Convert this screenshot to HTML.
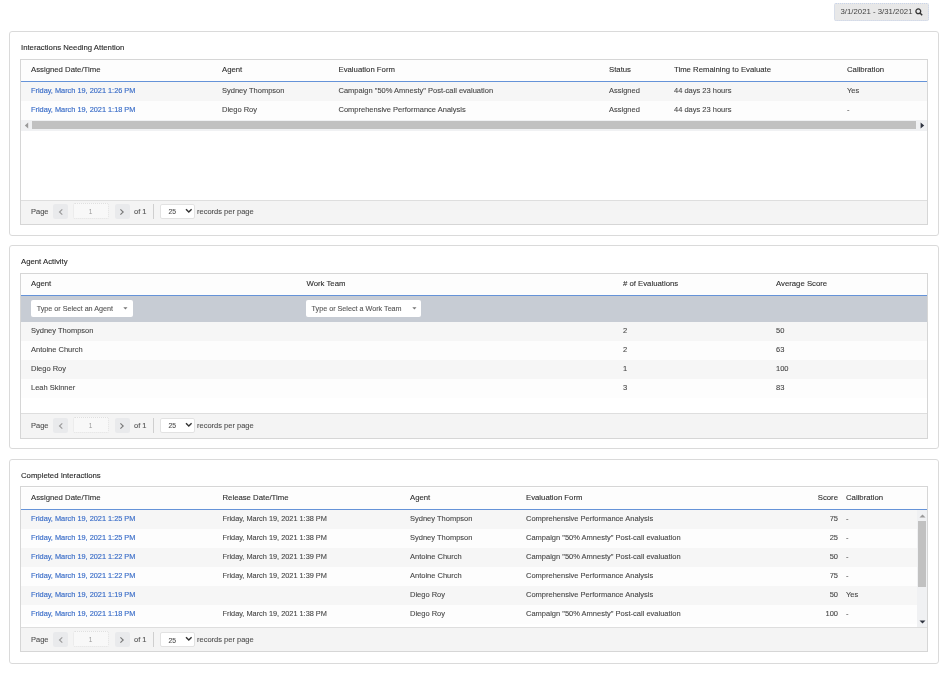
<!DOCTYPE html>
<html><head><meta charset="utf-8"><style>
html,body{margin:0;padding:0;background:#fff;width:950px;height:682px;overflow:hidden;position:relative}
#root{position:absolute;left:0;top:0;width:950px;height:682px;will-change:transform}
.t{position:absolute;white-space:nowrap;line-height:1;font-family:"Liberation Sans",sans-serif}
.b{color:#474747;-webkit-text-stroke:0.1px #474747}
.h{color:#2e2e2e;-webkit-text-stroke:0.1px #2e2e2e}
.ttl{color:#2a2a2a;-webkit-text-stroke:0.12px #2a2a2a}
.lk{color:#3a6dc8;-webkit-text-stroke:0.15px #3a6dc8}
.p{color:#505050;-webkit-text-stroke:0.1px #505050}
.btn{color:#444}
.f{color:#555;-webkit-text-stroke:0.1px #555}
</style></head><body><div id="root">
<div style="position:absolute;left:834px;top:3px;width:95px;height:18px;background:#e8e8e8;border:1px dotted #c8d4ea;box-sizing:border-box;border-radius:2px"></div>
<div class="t btn" style="left:840.5px;top:8.20px;font-size:7.8px;">3/1/2021 - 3/31/2021</div>
<svg style="position:absolute;left:915px;top:8px" width="8" height="8" viewBox="0 0 8 8"><circle cx="3.3" cy="3.3" r="2.4" fill="none" stroke="#333" stroke-width="1.3"/><path d="M5 5 L7.2 7.2" stroke="#333" stroke-width="1.5"/></svg>
<div style="position:absolute;left:9px;top:31px;width:930px;height:204.5px;border:1px solid #dadada;border-radius:3px;box-sizing:border-box"></div>
<div class="t ttl" style="left:21px;top:43.64px;font-size:7.75px;">Interactions Needing Attention</div>
<div style="position:absolute;left:20px;top:59px;width:908px;height:166px;border:1px solid #d6d6d6;box-sizing:border-box;background:#fff"></div>
<div style="position:absolute;left:21px;top:60px;width:906px;height:21px;background:#fdfdfd"></div>
<div style="position:absolute;left:21px;top:81px;width:906px;height:1px;background:#6593d8"></div>
<div class="t h" style="left:31px;top:65.54px;font-size:7.75px;">Assigned Date/Time</div>
<div class="t h" style="left:222px;top:65.54px;font-size:7.75px;">Agent</div>
<div class="t h" style="left:338.5px;top:65.54px;font-size:7.75px;">Evaluation Form</div>
<div class="t h" style="left:609px;top:65.54px;font-size:7.75px;">Status</div>
<div class="t h" style="left:674px;top:65.54px;font-size:7.75px;">Time Remaining to Evaluate</div>
<div class="t h" style="left:847px;top:65.54px;font-size:7.75px;">Calibration</div>
<div style="position:absolute;left:21px;top:82px;width:906px;height:19px;background:#f6f6f6"></div>
<div style="position:absolute;left:21px;top:101px;width:906px;height:19px;background:#fdfdfd"></div>
<div class="t lk" style="left:31px;top:87.38px;font-size:7.35px;">Friday, March 19, 2021 1:26 PM</div>
<div class="t b" style="left:222px;top:87.25px;font-size:7.5px;">Sydney Thompson</div>
<div class="t b" style="left:338.5px;top:87.25px;font-size:7.5px;">Campaign "50% Amnesty" Post-call evaluation</div>
<div class="t b" style="left:609px;top:87.25px;font-size:7.5px;">Assigned</div>
<div class="t b" style="left:674px;top:87.25px;font-size:7.5px;">44 days 23 hours</div>
<div class="t b" style="left:847px;top:87.25px;font-size:7.5px;">Yes</div>
<div class="t lk" style="left:31px;top:106.38px;font-size:7.35px;">Friday, March 19, 2021 1:18 PM</div>
<div class="t b" style="left:222px;top:106.25px;font-size:7.5px;">Diego Roy</div>
<div class="t b" style="left:338.5px;top:106.25px;font-size:7.5px;">Comprehensive Performance Analysis</div>
<div class="t b" style="left:609px;top:106.25px;font-size:7.5px;">Assigned</div>
<div class="t b" style="left:674px;top:106.25px;font-size:7.5px;">44 days 23 hours</div>
<div class="t b" style="left:847px;top:106.25px;font-size:7.5px;">-</div>
<div style="position:absolute;left:21px;top:120px;width:906px;height:10.5px;background:#f0f1f3"></div>
<div style="position:absolute;left:32px;top:121px;width:884px;height:8.3px;background:#c1c1c1"></div>
<svg style="position:absolute;left:24px;top:122px" width="5" height="7" viewBox="0 0 5 7"><path d="M4.2 0.5 L0.8 3.5 L4.2 6.5Z" fill="#9a9a9a"/></svg>
<svg style="position:absolute;left:920px;top:122px" width="5" height="7" viewBox="0 0 5 7"><path d="M0.6 0.5 L4.2 3.5 L0.6 6.5Z" fill="#2f3440"/></svg>
<div style="position:absolute;left:21px;top:200px;width:906px;height:24px;background:#f4f4f4;border-top:1px solid #dedede;box-sizing:border-box"></div>
<div class="t p" style="left:31px;top:207.55px;font-size:7.5px;">Page</div>
<div style="position:absolute;left:52.5px;top:203.5px;width:15px;height:15.5px;background:#e9eaec;border-radius:2px"></div>
<svg style="position:absolute;left:58px;top:208.5px" width="6" height="6" viewBox="0 0 6 6"><path d="M4.3 0.4 L1.5 3 L4.3 5.6" fill="none" stroke="#999" stroke-width="1.1"/></svg>
<div style="position:absolute;left:73px;top:203.2px;width:36px;height:16px;background:#f8f8f8;border:1px dotted #e0e0e0;box-sizing:border-box;border-radius:2px"></div>
<div class="t p" style="left:90.5px;top:209.05px;font-size:7.5px;color:#999;-webkit-text-stroke:0;transform:translateX(-50%);font-size:6.5px">1</div>
<div style="position:absolute;left:114.5px;top:203.5px;width:15px;height:15.5px;background:#e9eaec;border-radius:2px"></div>
<svg style="position:absolute;left:118.5px;top:208.5px" width="6" height="6" viewBox="0 0 6 6"><path d="M1.4 0.4 L4.2 3 L1.4 5.6" fill="none" stroke="#777" stroke-width="1.1"/></svg>
<div class="t p" style="left:134px;top:207.75px;font-size:7.5px;">of 1</div>
<div style="position:absolute;left:153px;top:203.5px;width:1px;height:15px;background:#cfcfcf"></div>
<div style="position:absolute;left:159.5px;top:203.5px;width:35px;height:15.5px;background:#fff;border:1px solid #e2e2e2;box-sizing:border-box;border-radius:2px"></div>
<div class="t p" style="left:168.5px;top:209.35px;font-size:7.5px;font-size:6.8px">25</div>
<svg style="position:absolute;left:185px;top:208.0px" width="8" height="6" viewBox="0 0 8 6"><path d="M1 1.2 L3.8 4 L6.6 1.2" fill="none" stroke="#333" stroke-width="1.4"/></svg>
<div class="t p" style="left:197px;top:207.65px;font-size:7.5px;">records per page</div>
<div style="position:absolute;left:9px;top:245px;width:930px;height:203.5px;border:1px solid #dadada;border-radius:3px;box-sizing:border-box"></div>
<div class="t ttl" style="left:21px;top:257.64px;font-size:7.75px;">Agent Activity</div>
<div style="position:absolute;left:20px;top:272.5px;width:908px;height:166.0px;border:1px solid #d6d6d6;box-sizing:border-box;background:#fff"></div>
<div style="position:absolute;left:21px;top:274px;width:906px;height:21px;background:#fdfdfd"></div>
<div style="position:absolute;left:21px;top:295px;width:906px;height:1px;background:#6593d8"></div>
<div class="t h" style="left:31px;top:279.54px;font-size:7.75px;">Agent</div>
<div class="t h" style="left:306.5px;top:279.54px;font-size:7.75px;">Work Team</div>
<div class="t h" style="left:623px;top:279.54px;font-size:7.75px;"># of Evaluations</div>
<div class="t h" style="left:776px;top:279.54px;font-size:7.75px;">Average Score</div>
<div style="position:absolute;left:21px;top:296px;width:906px;height:25.5px;background:#c7ccd4"></div>
<div style="position:absolute;left:31px;top:300px;width:101.5px;height:17.2px;background:#fff;border-radius:2px"></div>
<div class="t f" style="left:36.7px;top:304.91px;font-size:7.2px;">Type or Select an Agent</div>
<svg style="position:absolute;left:123px;top:307px" width="5" height="3" viewBox="0 0 5 3"><path d="M0.3 0.3 L4.5 0.3 L2.4 2.6Z" fill="#777"/></svg>
<div style="position:absolute;left:306px;top:300px;width:114.7px;height:17.2px;background:#fff;border-radius:2px"></div>
<div class="t f" style="left:311.6px;top:304.91px;font-size:7.2px;">Type or Select a Work Team</div>
<svg style="position:absolute;left:411.5px;top:307px" width="5" height="3" viewBox="0 0 5 3"><path d="M0.3 0.3 L4.5 0.3 L2.4 2.6Z" fill="#777"/></svg>
<div style="position:absolute;left:21px;top:321.5px;width:906px;height:19px;background:#f6f6f6"></div>
<div style="position:absolute;left:21px;top:340.5px;width:906px;height:19px;background:#fdfdfd"></div>
<div style="position:absolute;left:21px;top:359.5px;width:906px;height:19px;background:#f6f6f6"></div>
<div style="position:absolute;left:21px;top:378.5px;width:906px;height:19px;background:#fdfdfd"></div>
<div class="t b" style="left:31px;top:326.85px;font-size:7.5px;">Sydney Thompson</div>
<div class="t b" style="left:623px;top:326.85px;font-size:7.5px;">2</div>
<div class="t b" style="left:776px;top:326.85px;font-size:7.5px;">50</div>
<div class="t b" style="left:31px;top:345.85px;font-size:7.5px;">Antoine Church</div>
<div class="t b" style="left:623px;top:345.85px;font-size:7.5px;">2</div>
<div class="t b" style="left:776px;top:345.85px;font-size:7.5px;">63</div>
<div class="t b" style="left:31px;top:364.85px;font-size:7.5px;">Diego Roy</div>
<div class="t b" style="left:623px;top:364.85px;font-size:7.5px;">1</div>
<div class="t b" style="left:776px;top:364.85px;font-size:7.5px;">100</div>
<div class="t b" style="left:31px;top:383.85px;font-size:7.5px;">Leah Skinner</div>
<div class="t b" style="left:623px;top:383.85px;font-size:7.5px;">3</div>
<div class="t b" style="left:776px;top:383.85px;font-size:7.5px;">83</div>
<div style="position:absolute;left:21px;top:413px;width:906px;height:24.5px;background:#f4f4f4;border-top:1px solid #dedede;box-sizing:border-box"></div>
<div class="t p" style="left:31px;top:421.55px;font-size:7.5px;">Page</div>
<div style="position:absolute;left:52.5px;top:417.5px;width:15px;height:15.5px;background:#e9eaec;border-radius:2px"></div>
<svg style="position:absolute;left:58px;top:422.5px" width="6" height="6" viewBox="0 0 6 6"><path d="M4.3 0.4 L1.5 3 L4.3 5.6" fill="none" stroke="#999" stroke-width="1.1"/></svg>
<div style="position:absolute;left:73px;top:417.2px;width:36px;height:16px;background:#f8f8f8;border:1px dotted #e0e0e0;box-sizing:border-box;border-radius:2px"></div>
<div class="t p" style="left:90.5px;top:423.05px;font-size:7.5px;color:#999;-webkit-text-stroke:0;transform:translateX(-50%);font-size:6.5px">1</div>
<div style="position:absolute;left:114.5px;top:417.5px;width:15px;height:15.5px;background:#e9eaec;border-radius:2px"></div>
<svg style="position:absolute;left:118.5px;top:422.5px" width="6" height="6" viewBox="0 0 6 6"><path d="M1.4 0.4 L4.2 3 L1.4 5.6" fill="none" stroke="#777" stroke-width="1.1"/></svg>
<div class="t p" style="left:134px;top:421.75px;font-size:7.5px;">of 1</div>
<div style="position:absolute;left:153px;top:417.5px;width:1px;height:15px;background:#cfcfcf"></div>
<div style="position:absolute;left:159.5px;top:417.5px;width:35px;height:15.5px;background:#fff;border:1px solid #e2e2e2;box-sizing:border-box;border-radius:2px"></div>
<div class="t p" style="left:168.5px;top:423.35px;font-size:7.5px;font-size:6.8px">25</div>
<svg style="position:absolute;left:185px;top:422.0px" width="8" height="6" viewBox="0 0 8 6"><path d="M1 1.2 L3.8 4 L6.6 1.2" fill="none" stroke="#333" stroke-width="1.4"/></svg>
<div class="t p" style="left:197px;top:421.65px;font-size:7.5px;">records per page</div>
<div style="position:absolute;left:9px;top:459px;width:930px;height:204.5px;border:1px solid #dadada;border-radius:3px;box-sizing:border-box"></div>
<div class="t ttl" style="left:21px;top:472.04px;font-size:7.75px;">Completed Interactions</div>
<div style="position:absolute;left:20px;top:486px;width:908px;height:166px;border:1px solid #d6d6d6;box-sizing:border-box;background:#fff"></div>
<div style="position:absolute;left:21px;top:488px;width:906px;height:21.399999999999977px;background:#fdfdfd"></div>
<div style="position:absolute;left:21px;top:509.4px;width:906px;height:1px;background:#6593d8"></div>
<div class="t h" style="left:31px;top:493.94px;font-size:7.75px;">Assigned Date/Time</div>
<div class="t h" style="left:222.5px;top:493.94px;font-size:7.75px;">Release Date/Time</div>
<div class="t h" style="left:410px;top:493.94px;font-size:7.75px;">Agent</div>
<div class="t h" style="left:526px;top:493.94px;font-size:7.75px;">Evaluation Form</div>
<div class="t h" style="left:838px;top:493.94px;font-size:7.75px;transform:translateX(-100%)">Score</div>
<div class="t h" style="left:846px;top:493.94px;font-size:7.75px;">Calibration</div>
<div style="position:absolute;left:21px;top:510px;width:906px;height:19px;background:#f6f6f6"></div>
<div style="position:absolute;left:21px;top:529px;width:906px;height:19px;background:#fdfdfd"></div>
<div style="position:absolute;left:21px;top:548px;width:906px;height:19px;background:#f6f6f6"></div>
<div style="position:absolute;left:21px;top:567px;width:906px;height:19px;background:#fdfdfd"></div>
<div style="position:absolute;left:21px;top:586px;width:906px;height:19px;background:#f6f6f6"></div>
<div style="position:absolute;left:21px;top:605px;width:906px;height:19px;background:#fdfdfd"></div>
<div class="t lk" style="left:31px;top:515.28px;font-size:7.35px;">Friday, March 19, 2021 1:25 PM</div>
<div class="t b" style="left:222.5px;top:515.28px;font-size:7.35px;">Friday, March 19, 2021 1:38 PM</div>
<div class="t b" style="left:410px;top:515.15px;font-size:7.5px;">Sydney Thompson</div>
<div class="t b" style="left:526px;top:515.15px;font-size:7.5px;">Comprehensive Performance Analysis</div>
<div class="t b" style="left:838px;top:515.15px;font-size:7.5px;transform:translateX(-100%)">75</div>
<div class="t b" style="left:846px;top:515.15px;font-size:7.5px;">-</div>
<div class="t lk" style="left:31px;top:534.28px;font-size:7.35px;">Friday, March 19, 2021 1:25 PM</div>
<div class="t b" style="left:222.5px;top:534.28px;font-size:7.35px;">Friday, March 19, 2021 1:38 PM</div>
<div class="t b" style="left:410px;top:534.15px;font-size:7.5px;">Sydney Thompson</div>
<div class="t b" style="left:526px;top:534.15px;font-size:7.5px;">Campaign "50% Amnesty" Post-call evaluation</div>
<div class="t b" style="left:838px;top:534.15px;font-size:7.5px;transform:translateX(-100%)">25</div>
<div class="t b" style="left:846px;top:534.15px;font-size:7.5px;">-</div>
<div class="t lk" style="left:31px;top:553.28px;font-size:7.35px;">Friday, March 19, 2021 1:22 PM</div>
<div class="t b" style="left:222.5px;top:553.28px;font-size:7.35px;">Friday, March 19, 2021 1:39 PM</div>
<div class="t b" style="left:410px;top:553.15px;font-size:7.5px;">Antoine Church</div>
<div class="t b" style="left:526px;top:553.15px;font-size:7.5px;">Campaign "50% Amnesty" Post-call evaluation</div>
<div class="t b" style="left:838px;top:553.15px;font-size:7.5px;transform:translateX(-100%)">50</div>
<div class="t b" style="left:846px;top:553.15px;font-size:7.5px;">-</div>
<div class="t lk" style="left:31px;top:572.28px;font-size:7.35px;">Friday, March 19, 2021 1:22 PM</div>
<div class="t b" style="left:222.5px;top:572.28px;font-size:7.35px;">Friday, March 19, 2021 1:39 PM</div>
<div class="t b" style="left:410px;top:572.15px;font-size:7.5px;">Antoine Church</div>
<div class="t b" style="left:526px;top:572.15px;font-size:7.5px;">Comprehensive Performance Analysis</div>
<div class="t b" style="left:838px;top:572.15px;font-size:7.5px;transform:translateX(-100%)">75</div>
<div class="t b" style="left:846px;top:572.15px;font-size:7.5px;">-</div>
<div class="t lk" style="left:31px;top:591.28px;font-size:7.35px;">Friday, March 19, 2021 1:19 PM</div>
<div class="t b" style="left:410px;top:591.15px;font-size:7.5px;">Diego Roy</div>
<div class="t b" style="left:526px;top:591.15px;font-size:7.5px;">Comprehensive Performance Analysis</div>
<div class="t b" style="left:838px;top:591.15px;font-size:7.5px;transform:translateX(-100%)">50</div>
<div class="t b" style="left:846px;top:591.15px;font-size:7.5px;">Yes</div>
<div class="t lk" style="left:31px;top:610.28px;font-size:7.35px;">Friday, March 19, 2021 1:18 PM</div>
<div class="t b" style="left:222.5px;top:610.28px;font-size:7.35px;">Friday, March 19, 2021 1:38 PM</div>
<div class="t b" style="left:410px;top:610.15px;font-size:7.5px;">Diego Roy</div>
<div class="t b" style="left:526px;top:610.15px;font-size:7.5px;">Campaign "50% Amnesty" Post-call evaluation</div>
<div class="t b" style="left:838px;top:610.15px;font-size:7.5px;transform:translateX(-100%)">100</div>
<div class="t b" style="left:846px;top:610.15px;font-size:7.5px;">-</div>
<div style="position:absolute;left:917px;top:510px;width:10px;height:117px;background:#f0f1f3"></div>
<div style="position:absolute;left:917.8px;top:520.7px;width:8.6px;height:66px;background:#c1c1c1"></div>
<svg style="position:absolute;left:919px;top:514px" width="7" height="4" viewBox="0 0 7 4"><path d="M0.5 3.6 L3.5 0.4 L6.5 3.6Z" fill="#9a9a9a"/></svg>
<svg style="position:absolute;left:919px;top:620px" width="7" height="4" viewBox="0 0 7 4"><path d="M0.5 0.4 L3.5 3.6 L6.5 0.4Z" fill="#2f3440"/></svg>
<div style="position:absolute;left:21px;top:627.2px;width:906px;height:23.799999999999955px;background:#f4f4f4;border-top:1px solid #dedede;box-sizing:border-box"></div>
<div class="t p" style="left:31px;top:635.75px;font-size:7.5px;">Page</div>
<div style="position:absolute;left:52.5px;top:631.7px;width:15px;height:15.5px;background:#e9eaec;border-radius:2px"></div>
<svg style="position:absolute;left:58px;top:636.7px" width="6" height="6" viewBox="0 0 6 6"><path d="M4.3 0.4 L1.5 3 L4.3 5.6" fill="none" stroke="#999" stroke-width="1.1"/></svg>
<div style="position:absolute;left:73px;top:631.4000000000001px;width:36px;height:16px;background:#f8f8f8;border:1px dotted #e0e0e0;box-sizing:border-box;border-radius:2px"></div>
<div class="t p" style="left:90.5px;top:637.25px;font-size:7.5px;color:#999;-webkit-text-stroke:0;transform:translateX(-50%);font-size:6.5px">1</div>
<div style="position:absolute;left:114.5px;top:631.7px;width:15px;height:15.5px;background:#e9eaec;border-radius:2px"></div>
<svg style="position:absolute;left:118.5px;top:636.7px" width="6" height="6" viewBox="0 0 6 6"><path d="M1.4 0.4 L4.2 3 L1.4 5.6" fill="none" stroke="#777" stroke-width="1.1"/></svg>
<div class="t p" style="left:134px;top:635.95px;font-size:7.5px;">of 1</div>
<div style="position:absolute;left:153px;top:631.7px;width:1px;height:15px;background:#cfcfcf"></div>
<div style="position:absolute;left:159.5px;top:631.7px;width:35px;height:15.5px;background:#fff;border:1px solid #e2e2e2;box-sizing:border-box;border-radius:2px"></div>
<div class="t p" style="left:168.5px;top:637.55px;font-size:7.5px;font-size:6.8px">25</div>
<svg style="position:absolute;left:185px;top:636.2px" width="8" height="6" viewBox="0 0 8 6"><path d="M1 1.2 L3.8 4 L6.6 1.2" fill="none" stroke="#333" stroke-width="1.4"/></svg>
<div class="t p" style="left:197px;top:635.85px;font-size:7.5px;">records per page</div>
</div></body></html>
